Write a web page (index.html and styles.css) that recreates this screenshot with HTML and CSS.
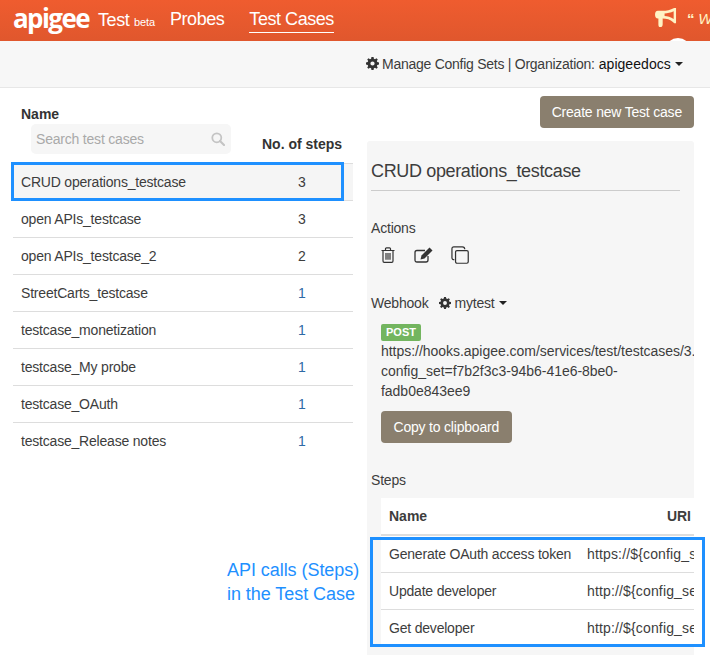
FILE: index.html
```html
<!DOCTYPE html>
<html lang="en">
<head>
<meta charset="utf-8">
<title>Apigee Test</title>
<link rel="stylesheet" href="styles.css">
</head>
<body>
<header class="topbar">
  <span class="logo">apigee</span>
  <span class="product">Test <small class="beta">beta</small></span>
  <nav class="mainnav">
    <a class="navlink">Probes</a>
    <a class="navlink active">Test Cases</a>
  </nav>
  <div class="notice">
    <svg class="megaphone" viewBox="0 0 24 22" width="23" height="21"><path fill="#fff3c4" d="M20 1 L22 1 L22 17 L20 17 L19 16 C16 13 12 12 8 12 L8 18 C8 20 7 21 5.500 21 C4 21 3.500 20 3.500 18 L3.500 12 L3 12 C1 12 0 10.500 0 8 C0 5.500 1 4 3 4 L8 4 C12 4 16 3 20 1 Z M19.500 4.500 C16.500 6 13 6.600 10 6.800 L10 9.400 C13 9.600 16.500 10.400 19.500 12.500 Z"/></svg>
    <span class="quote"><b class="quotemark">“</b> W</span>
  </div>
  <span class="avatar"></span>
</header>
<div class="subbar">
  <svg class="gear" viewBox="0 0 16 16" width="13" height="13"><use href="#gear-shape"/></svg>
  <span class="subtext managetext">Manage Config Sets | Organization:</span>
  <span class="org">apigeedocs</span><span class="caret"></span>
</div>
<svg class="defs" width="0" height="0"><defs><path id="gear-shape" fill-rule="evenodd" d="M6.700 0 H9.300 L9.700 2.100 L11.100 2.700 L12.900 1.500 L14.500 3.100 L13.300 4.900 L13.900 6.300 L16 6.700 V9.300 L13.900 9.700 L13.300 11.100 L14.500 12.900 L12.900 14.500 L11.100 13.300 L9.700 13.900 L9.300 16 H6.700 L6.300 13.900 L4.900 13.300 L3.100 14.500 L1.500 12.900 L2.700 11.100 L2.100 9.700 L0 9.300 V6.700 L2.100 6.300 L2.700 4.900 L1.500 3.100 L3.100 1.500 L4.900 2.700 L6.300 2.100 Z M8 5.400 A2.600 2.600 0 1 0 8 10.600 A2.600 2.600 0 1 0 8 5.400 Z"/></defs></svg>
<main class="content">
  <section class="listcol">
    <div class="listhead">
      <div class="namehead">
        <div class="headlabel">Name</div>
        <div class="search">
          <span class="searchtext">Search test cases</span>
          <svg class="searchicon" viewBox="0 0 14 14" width="14" height="14"><circle cx="5.800" cy="5.800" r="4.500" fill="none" stroke="#c4c4c4" stroke-width="1.800"/><path d="M9 9 L13 13" stroke="#c4c4c4" stroke-width="2.200" stroke-linecap="round"/></svg>
        </div>
      </div>
      <div class="headlabel stepshead">No. of steps</div>
    </div>
    <div class="row selected"><span class="rowname">CRUD operations_testcase</span><span class="rowcount">3</span></div>
    <div class="row"><span class="rowname">open APIs_testcase</span><span class="rowcount">3</span></div>
    <div class="row"><span class="rowname">open APIs_testcase_2</span><span class="rowcount">2</span></div>
    <div class="row"><span class="rowname">StreetCarts_testcase</span><span class="rowcount link">1</span></div>
    <div class="row"><span class="rowname">testcase_monetization</span><span class="rowcount link">1</span></div>
    <div class="row"><span class="rowname">testcase_My probe</span><span class="rowcount link">1</span></div>
    <div class="row"><span class="rowname">testcase_OAuth</span><span class="rowcount link">1</span></div>
    <div class="row lastrow"><span class="rowname">testcase_Release notes</span><span class="rowcount link">1</span></div>
  </section>
  <section class="detailcol">
    <div class="createwrap"><button class="btn">Create new Test case</button></div>
    <div class="panel">
      <h2 class="paneltitle">CRUD operations_testcase</h2>
      <div class="label actionslabel">Actions</div>
      <div class="actions">
        <svg viewBox="0 0 14 16" width="14" height="16" fill="none" stroke="#333" stroke-width="1.200"><path d="M0.500 3.500 H13.500 M4.500 3.500 V1.800 Q4.500 0.800 5.500 0.800 H8.500 Q9.500 0.800 9.500 1.800 V3.500 M2 3.500 V14 Q2 15.300 3.200 15.300 H10.800 Q12 15.300 12 14 V3.500 M5 6 V12.800 M7 6 V12.800 M9 6 V12.800"/></svg>
        <svg class="editicon" viewBox="0 0 19 16" width="19" height="16" fill="none" stroke="#333" stroke-width="1.300"><path d="M14 9 V13 Q14 15 12 15 H3 Q1 15 1 13 V5.500 Q1 3.500 3 3.500 H11"/><path fill="#333" stroke="none" d="M15.500 0.500 L18.500 3.500 L10.500 11.500 L6.500 12.500 L7.500 8.500 Z"/></svg>
        <svg class="copyicon" viewBox="0 0 19 19" width="18" height="18" fill="none" stroke="#333" stroke-width="1.300"><path d="M3.500 14.500 Q1 14.500 1 12.500 V3 Q1 1 3 1 H12 Q14.500 1 14.500 3.500"/><rect x="4.800" y="4.800" width="13.400" height="13.400" rx="1.500"/></svg>
      </div>
      <div class="webhook">
        <span class="label">Webhook</span>
        <svg class="gear" viewBox="0 0 16 16" width="12" height="12"><use href="#gear-shape"/></svg>
        <span class="subtext hookname">mytest</span><span class="caret"></span>
      </div>
      <div class="hookbody">
        <span class="badge">POST</span>
        <div class="url">https://hooks.apigee.com/services/test/testcases/3.<br>config_set=f7b2f3c3-94b6-41e6-8be0-<br>fadb0e843ee9</div>
        <button class="btn copy">Copy to clipboard</button>
      </div>
      <div class="label stepslabel">Steps</div>
      <div class="steps">
        <div class="stephead"><span>Name</span><span>URI</span></div>
        <div class="step"><span class="stepname">Generate OAuth access token</span><span class="stepuri">https://${config_server}</span></div>
        <div class="step"><span class="stepname">Update developer</span><span class="stepuri">http://${config_server}</span></div>
        <div class="step"><span class="stepname">Get developer</span><span class="stepuri">http://${config_server}</span></div>
      </div>
    </div>
  </section>
</main>
<div class="callout callout-row"></div>
<div class="callout callout-steps"></div>
<div class="callout-text">API calls (Steps)<br>in the Test Case</div>
</body>
</html>
```
FILE: styles.css
```css
html, body { margin: 0; padding: 0; }
body {
  width: 710px;
  height: 655px;
  overflow: hidden;
  position: relative;
  background: #fff;
  font-family: "Liberation Sans", Arial, sans-serif;
  font-size: 14px;
  letter-spacing: -0.2px;
  color: #3d3d3d;
}
.defs { position: absolute; }
.topbar {
  height: 41px;
  display: flex;
  align-items: flex-start;
  background: linear-gradient(#ef5c2f, #e0572d);
  color: #fff;
  position: relative;
  overflow: hidden;
}
.logo {
  margin: 0 0 0 13px;
  font-family: "Open Sans", sans-serif;
  font-weight: 700;
  font-size: 26px;
  line-height: 36px;
  letter-spacing: -1.6px;
  width: 85px;
}
.product { font-size: 18px; line-height: 41px; width: 72px; white-space: nowrap; letter-spacing: -0.4px; }
.beta { font-size: 11px; margin-left: 0; letter-spacing: -0.1px; }
.mainnav { display: flex; gap: 25px; }
.navlink { font-size: 18px; line-height: 39px; height: 32px; letter-spacing: -0.45px; }
.navlink.active { border-bottom: 1px solid #fff; }
.notice { position: absolute; left: 655px; top: 7px; display: flex; gap: 9px; color: #fff3c4; white-space: nowrap; }
.quote { font-style: italic; font-size: 15px; line-height: 24px; }
.quotemark { font-style: normal; }
.avatar { position: absolute; left: 665px; top: 38px; width: 26px; height: 26px; border-radius: 50%; background: #fff; }
.subbar {
  height: 45px;
  padding-bottom: 1px;
  background: #f7f7f7;
  border-bottom: 1px solid #e7e7e7;
  display: flex;
  align-items: center;
  padding-left: 366px;
  white-space: nowrap;
  margin-bottom: -1px;
}
.gear { fill: #333; flex: none; }
.subtext { margin-left: 3px; color: #3c3c3c; }
.managetext { letter-spacing: -0.26px; }
.org { margin-left: 4px; color: #111; letter-spacing: 0.05px; }
.caret {
  display: inline-block;
  margin-left: 4px;
  border-left: 4px solid transparent;
  border-right: 4px solid transparent;
  border-top: 4px solid #222;
}
.content { display: flex; align-items: flex-start; padding-left: 13px; }
.listcol { width: 340px; flex: none; }
.listhead { display: flex; height: 76px; position: relative; }
.namehead { padding: 19px 0 0 8px; width: 249px; box-sizing: border-box; }
.headlabel { font-weight: 700; line-height: 17px; color: #333; letter-spacing: 0; }
.search {
  margin: 1px 0 0 10px;
  width: 200px;
  height: 30px;
  box-sizing: border-box;
  padding: 0 6px 0 5px;
  background: #f6f6f6;
  border-radius: 5px;
  display: flex;
  align-items: center;
  justify-content: space-between;
  color: #a9a9a9;
}
.stepshead { margin-top: 49px; }
.row {
  height: 37px;
  box-sizing: border-box;
  display: flex;
  align-items: center;
  padding-left: 8px;
  border-bottom: 1px solid #ddd;
}
.row.selected { height: 38px; background: #f5f5f5; border-top: 1px solid #ddd; }
.row.lastrow { border-bottom-color: transparent; }
.rowname { width: 277px; }
.rowcount.link { color: #2f6aa5; }
.detailcol { width: 327px; margin-left: 14px; flex: none; }
.createwrap { display: flex; justify-content: flex-end; padding-top: 9px; height: 45px; }
.btn {
  font-family: inherit;
  font-size: 14px;
  letter-spacing: -0.2px;
  color: #fff;
  background: #8a7f6e;
  border: 0;
  border-radius: 4px;
  height: 32px;
  padding: 0 12px;
  margin: 0;
}
.panel {
  background: #f6f6f6;
  height: 514px;
  overflow: hidden;
  box-sizing: border-box;
  padding: 1px 0 0 4px;
  border-radius: 3px 3px 0 0;
  white-space: nowrap;
}
.paneltitle {
  margin: 0;
  width: 309px;
  height: 48px;
  font-size: 18px;
  font-weight: 400;
  letter-spacing: -0.35px;
  line-height: 59px;
  border-bottom: 1px solid #ccc;
}
.label { line-height: 17px; }
.actionslabel { margin-top: 29px; }
.actions { display: flex; align-items: flex-start; gap: 19px; margin: 10px 0 0 10px; height: 23px; }
.editicon { margin-right: -1px; }
.copyicon { margin-top: -1px; }
.webhook { display: flex; align-items: center; margin-top: 24px; height: 18px; }
.webhook .gear { margin-left: 10px; }
.hookname { margin-left: 4px; }
.hookbody { padding-left: 10px; margin-top: 12px; }
.badge {
  display: block;
  width: 40px;
  height: 17px;
  background: #73b55f;
  color: #fff;
  border-radius: 2px;
  font-size: 11px;
  font-weight: 700;
  letter-spacing: 0;
  line-height: 17px;
  text-align: center;
}
.url { line-height: 20px; letter-spacing: -0.03px; }
.copy { margin-top: 10px; padding: 0 12.5px; }
.stepslabel { margin-top: 29px; }
.steps { margin: 9px 0 0 10px; background: #fff; }
.stephead {
  height: 38px;
  box-sizing: border-box;
  display: flex;
  justify-content: space-between;
  align-items: center;
  padding: 0 3px 0 8px;
  font-weight: 700;
  letter-spacing: 0;
  border-bottom: 2px solid #ddd;
}
.step {
  height: 37px;
  box-sizing: border-box;
  display: flex;
  align-items: center;
  padding-left: 8px;
  border-bottom: 1px solid #ddd;
  overflow: hidden;
}
.step:last-child { border-bottom-color: transparent; }
.stepname { width: 198px; flex: none; }
.stepuri { letter-spacing: 0.15px; }
.callout { position: absolute; border: 3px solid #1e90ff; box-sizing: border-box; }
.callout-row { left: 11px; top: 162px; width: 333px; height: 39px; }
.callout-steps { left: 370px; top: 537px; width: 335px; height: 110px; }
.callout-text {
  position: absolute;
  left: 227px;
  top: 558px;
  color: #1e90ff;
  font-size: 18px;
  letter-spacing: -0.05px;
  line-height: 24px;
  white-space: nowrap;
}
```
